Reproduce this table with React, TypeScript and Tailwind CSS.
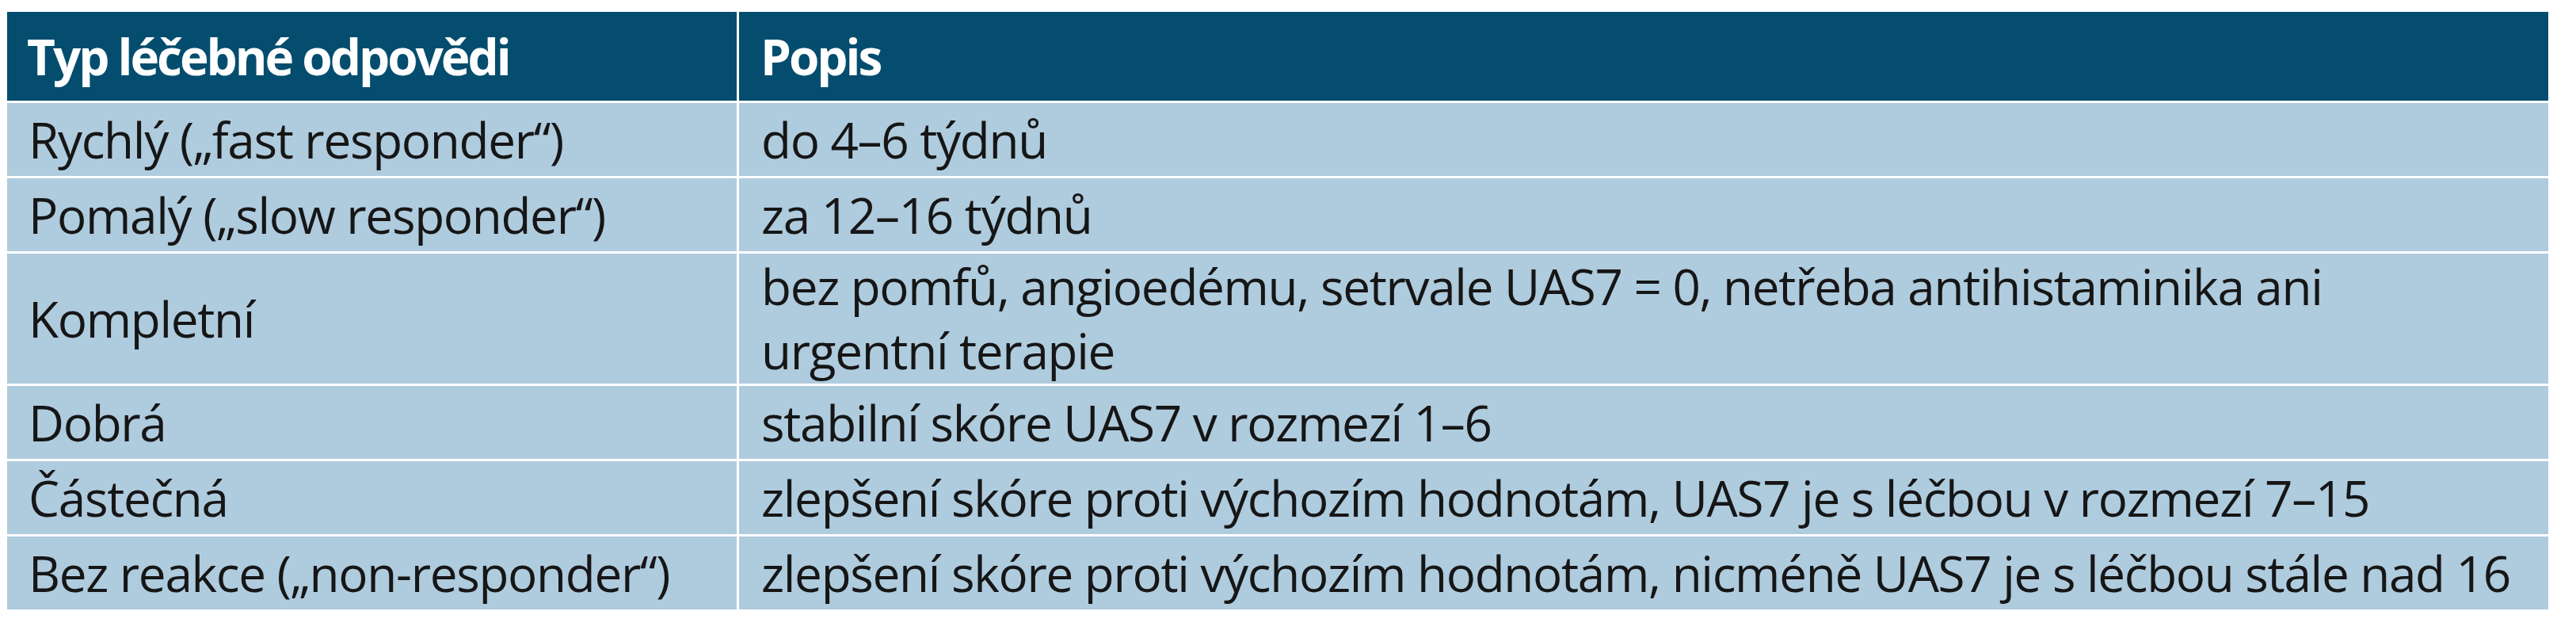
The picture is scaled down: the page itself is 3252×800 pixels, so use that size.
const rows: { typ: string; popis: React.ReactNode; tall?: boolean }[] = [
  { typ: 'Rychlý („fast responder“)', popis: 'do 4–6 týdnů' },
  { typ: 'Pomalý („slow responder“)', popis: 'za 12–16 týdnů' },
  {
    typ: 'Kompletní',
    popis: (
      <>
        bez pomfů, angioedému, setrvale UAS7 = 0, netřeba antihistaminika ani
        <br />
        urgentní terapie
      </>
    ),
    tall: true,
  },
  { typ: 'Dobrá', popis: 'stabilní skóre UAS7 v rozmezí 1–6' },
  { typ: 'Částečná', popis: 'zlepšení skóre proti výchozím hodnotám, UAS7 je s léčbou v rozmezí 7–15' },
  { typ: 'Bez reakce („non-responder“)', popis: 'zlepšení skóre proti výchozím hodnotám, nicméně UAS7 je s léčbou stále nad 16' },
];

export default function App() {
  return (
    <div className="w-[3252px] h-[800px] bg-white pt-[15px] pl-[9px] font-['Open_Sans',sans-serif] text-[62px] tracking-[-1.3px] whitespace-nowrap">
      <div className="grid grid-cols-[921px_2284px] gap-[3px]">
        <div className="h-[112px] bg-[#044d6e] text-white font-bold tracking-[-3px] flex items-center pl-[25px]">Typ léčebné odpovědi</div>
        <div className="h-[112px] bg-[#044d6e] text-white font-bold tracking-[-3px] flex items-center pl-[27px]">Popis</div>
        {rows.map((r) => (
          <>
            <div
              key={r.typ + '-t'}
              className={`${r.tall ? 'h-[164px]' : 'h-[92px]'} bg-[#afcbde] text-[#161616] flex items-center pl-[27px]`}
            >
              {r.typ}
            </div>
            <div
              key={r.typ + '-p'}
              className={`${r.tall ? 'h-[164px]' : 'h-[92px]'} bg-[#afcbde] text-[#161616] flex items-center pl-[28px] leading-[81px]`}
            >
              <div>{r.popis}</div>
            </div>
          </>
        ))}
      </div>
    </div>
  );
}
